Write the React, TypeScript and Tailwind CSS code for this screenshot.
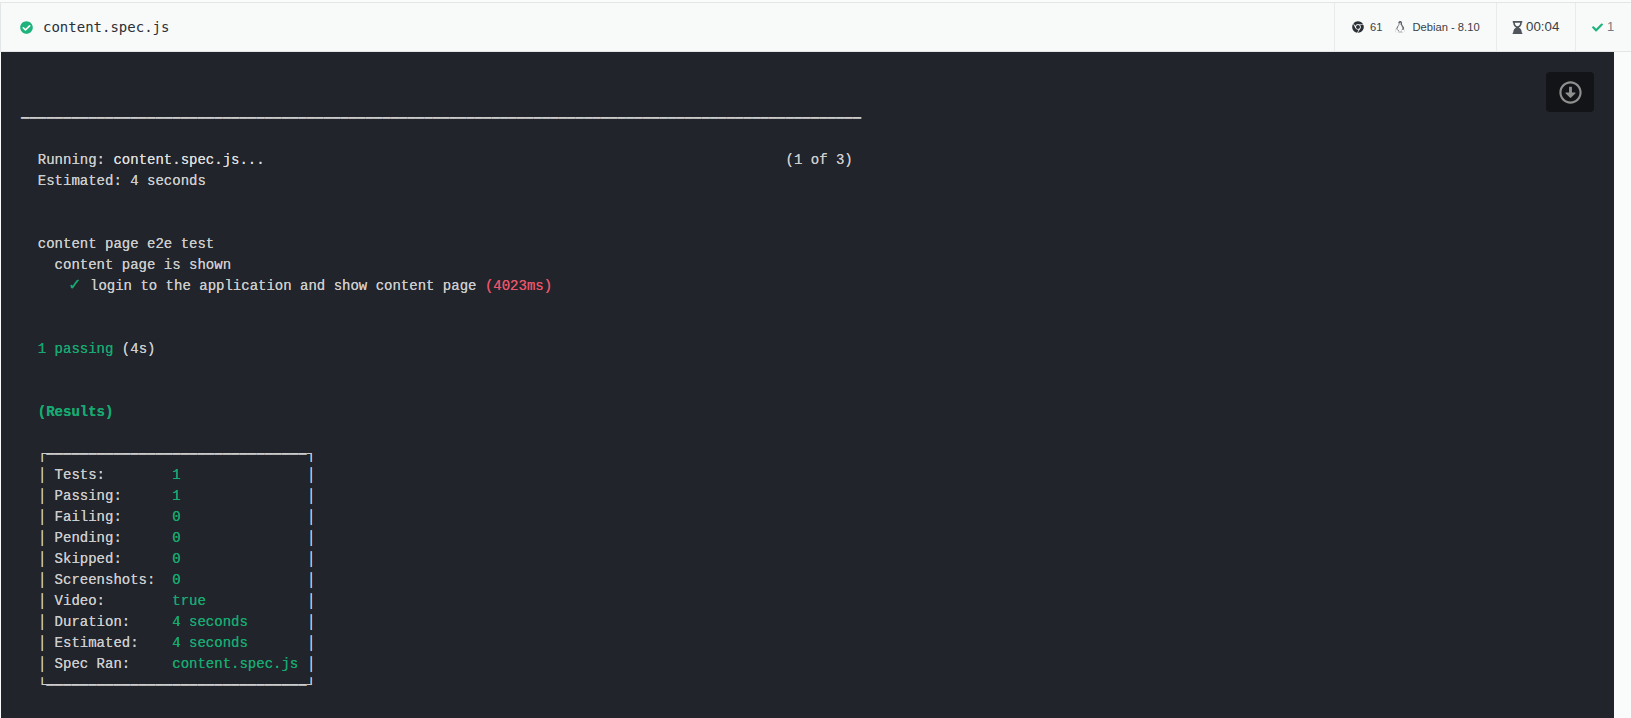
import { FaCheck, FaCheckCircle, FaChrome, FaHourglassEnd, FaLinux, FaRegArrowAltCircleDown } from "react-icons/fa";

const rows: [string, string][] = [
  ["Tests:", "1"],
  ["Passing:", "1"],
  ["Failing:", "0"],
  ["Pending:", "0"],
  ["Skipped:", "0"],
  ["Screenshots:", "0"],
  ["Video:", "true"],
  ["Duration:", "4 seconds"],
  ["Estimated:", "4 seconds"],
  ["Spec Ran:", "content.spec.js"],
];

function Green({ children }: { children: React.ReactNode }) {
  return <span className="text-[#17a971]">{children}</span>;
}

function Header() {
  return (
    <header className="flex h-[50px] items-stretch border border-r-0 border-[#e3e6e6] bg-[#f8fafa]">
      <div className="flex flex-1 items-center gap-[10px] pl-[19px] font-['DejaVu_Sans_Mono',monospace] text-sm text-[#2b2f36]">
        <FaCheckCircle className="h-[13px] w-[13px] text-[#1eb37c]" />
        content.spec.js
      </div>
      <div className="flex w-[162px] items-center border-l border-[#e8ebeb] pl-[17px] font-['Liberation_Sans',sans-serif] text-[11.2px] text-[#3a3f47]">
        <FaChrome className="h-[12px] w-[12px] text-[#2b2f36]" />
        <span className="ml-[6px]">61</span>
        <FaLinux className="ml-[12px] h-[12px] w-[12px] text-[#555a60]" />
        <span className="ml-[6px]">Debian - 8.10</span>
      </div>
      <div className="flex w-[79px] items-center border-l border-[#e8ebeb] pl-[14px] font-['Liberation_Sans',sans-serif] text-[13.3px] text-[#3a3f47]">
        <FaHourglassEnd className="h-[13px] w-[13px] text-[#50555c]" />
        <span className="ml-[2px]">00:04</span>
      </div>
      <div className="flex w-[56px] items-center border-l border-[#e8ebeb] pl-[16px] font-['Liberation_Sans',sans-serif] text-[13px] text-[#777c82]">
        <FaCheck className="h-[11px] w-[11px] text-[#1eb37c]" />
        <span className="ml-[4px]">1</span>
      </div>
    </header>
  );
}

export default function App() {
  const rule = "─".repeat(100);
  const boxLine = "─".repeat(31);
  return (
    <div className="h-[718px] overflow-hidden bg-[#fafbfb] pt-[2px]">
      <Header />
      <main className="relative ml-px h-[666px] w-[1613px] bg-[#21242b] pl-5 pt-[56px]">
        <button className="absolute right-5 top-5 flex h-10 w-12 items-center justify-center rounded-[4px] bg-[#131417] text-[#8f8f8f]">
          <FaRegArrowAltCircleDown className="h-[23px] w-[23px]" />
        </button>
        <pre className="font-['Liberation_Mono',monospace] text-sm leading-[21px] text-[#cccccc] [text-shadow:0_0_0.4px_currentColor]">
          <span className="[text-shadow:0_1px_0_#b5b5b5]">{rule}</span>
          {"\n\n  Running: "}
          <span className="text-[#dddddd]">content.spec.js...</span>
          {" ".repeat(62)}
          {"(1 of 3)"}
          {"\n  Estimated: 4 seconds\n\n\n  content page e2e test\n    content page is shown\n     "}
          <span className="inline-block w-[18.6px] text-right font-['DejaVu_Sans',sans-serif] text-base leading-[14px] font-bold text-[#17a971]">✓</span>
          {" login to the application and show content page "}
          <span className="text-[#e8546a]">(4023ms)</span>
          {"\n\n\n  "}
          <Green>1 passing</Green>
          {" (4s)\n\n\n  "}
          <span className="font-bold text-[#17a971]">(Results)</span>
          {"\n\n  ┌"}
          <span className="[text-shadow:0_1px_0_#b5b5b5]">{boxLine}</span>
          {"┐\n"}
          {rows.map(([label, value]) => (
            <span key={label}>
              {"  │ " + label.padEnd(14)}
              <Green>{value}</Green>
              {" ".repeat(15 - value.length) + " │\n"}
            </span>
          ))}
          {"  └"}
          <span className="[text-shadow:0_1px_0_#b5b5b5]">{boxLine}</span>
          {"┘"}
        </pre>
      </main>
    </div>
  );
}
